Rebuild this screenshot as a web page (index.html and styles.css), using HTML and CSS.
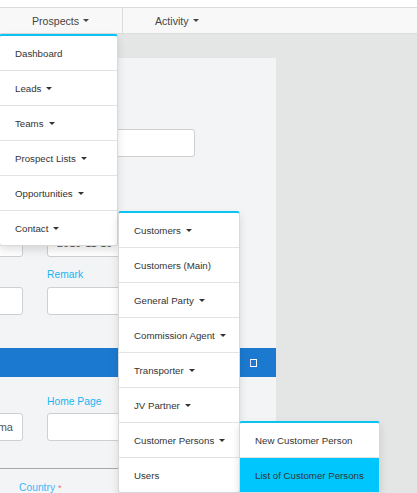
FILE: index.html
```html
<!DOCTYPE html>
<html>
<head>
<meta charset="utf-8">
<link rel="stylesheet" href="styles.css">
</head>
<body>
<div class="topstrip"></div>
<nav class="navbar">
  <div class="nav-item first">Prospects <span class="caret"></span>
    <ul class="dropdown d1">
      <li>Dashboard</li>
      <li>Leads <span class="caret"></span></li>
      <li>Teams <span class="caret"></span></li>
      <li>Prospect Lists <span class="caret"></span></li>
      <li>Opportunities <span class="caret"></span></li>
      <li class="sub">Contact <span class="caret"></span>
        <ul class="dropdown d2">
          <li>Customers <span class="caret"></span></li>
          <li>Customers (Main)</li>
          <li>General Party <span class="caret"></span></li>
          <li>Commission Agent <span class="caret"></span></li>
          <li>Transporter <span class="caret"></span></li>
          <li>JV Partner <span class="caret"></span></li>
          <li class="sub">Customer Persons <span class="caret"></span>
            <ul class="dropdown d3">
              <li>New Customer Person</li>
              <li class="active">List of Customer Persons</li>
            </ul>
          </li>
          <li>Users</li>
        </ul>
      </li>
    </ul>
  </div>
  <div class="nav-item">Activity <span class="caret"></span></div>
</nav>
<main class="main">
  <section class="panel">
    <div class="frow r1">
      <div></div>
      <div class="field"></div>
    </div>
    <div class="frow r2">
      <div class="field"></div>
      <div class="field"><span class="val">2019-11-19</span></div>
    </div>
    <div class="frow lbl r3">
      <div></div>
      <div class="label">Remark</div>
    </div>
    <div class="frow">
      <div class="field"></div>
      <div class="field"></div>
    </div>
    <div class="bar"><span class="sq"></span></div>
    <div class="frow lbl r5">
      <div></div>
      <div class="label">Home Page</div>
    </div>
    <div class="frow">
      <div class="field right"><span class="val">Kuma</span></div>
      <div class="field"></div>
    </div>
    <hr class="sep">
    <div class="label country">Country <span class="req">*</span></div>
  </section>
</main>
</body>
</html>
```
FILE: styles.css
```css
* { box-sizing: border-box; }
html, body { margin: 0; padding: 0; }
body {
  width: 417px;
  height: 493px;
  overflow: hidden;
  font-family: "Liberation Sans", Arial, sans-serif;
  background: #e4e6e5;
  color: #333;
}
.topstrip { height: 7px; background: #fff; }
.navbar {
  display: flex;
  height: 27px;
  background: #f8f8f8;
  border-top: 1px solid #dcdcdc;
  border-bottom: 1px solid #dcdcdc;
  font-size: 10.6px;
  color: #454545;
}
.nav-item {
  position: relative;
  display: flex;
  align-items: center;
  padding: 0 34px 0 32px;
  white-space: nowrap;
}
.nav-item.first { border-right: 1px solid #dcdcdc; width: 123px; }
.caret {
  display: inline-block;
  width: 0;
  height: 0;
  margin-left: 4px;
  border-top: 3.5px solid currentColor;
  border-left: 3px solid transparent;
  border-right: 3px solid transparent;
  vertical-align: middle;
}
.dropdown {
  position: absolute;
  list-style: none;
  margin: 0;
  padding: 0;
  background: #fff;
  border: 1px solid rgba(0,0,0,0.15);
  border-top: 2px solid #0bc3f3;
  border-radius: 3px;
  box-shadow: 0 4px 8px rgba(0,0,0,0.12);
  font-size: 9.7px;
  color: #333;
  z-index: 10;
}
.dropdown li {
  position: relative;
  height: 35px;
  display: flex;
  align-items: center;
  padding-left: 15px;
  border-bottom: 1px solid #e3e3e3;
  white-space: nowrap;
}
.dropdown li:last-child { border-bottom: none; height: 34px; }
.dropdown li .caret { margin-left: 5px; }
.d1 { top: 26px; left: -1px; width: 119px; }
.d2 { top: 0; left: 118px; width: 122px; }
.d3 { top: -2px; left: 120px; width: 141px; z-index: 11; }
.dropdown li.active { background: #00c6fe; }

.main {
  padding-top: 24px;
  height: 459px;
}
.panel {
  width: 276px;
  height: 435px;
  background: #f3f4f6;
  overflow: hidden;
  padding-top: 71px;
}
.frow {
  display: grid;
  grid-template-columns: 148px 148px;
  column-gap: 24px;
  margin-left: -125px;
}
.field {
  height: 28px;
  background: #fff;
  border: 1px solid #cfcfcf;
  border-radius: 3px;
  font-size: 11px;
  color: #555;
  display: flex;
  align-items: center;
  padding: 0 9px;
  overflow: hidden;
  white-space: nowrap;
}
.field.right { justify-content: flex-end; }
.r2 { margin-top: 72px; }
.lbl { height: 12px; }
.r3 { margin-top: 12px; margin-bottom: 6px; }
.label {
  font-size: 10.3px;
  line-height: 12px;
  color: #17b5f3;
}
.bar {
  margin-top: 33px;
  height: 29px;
  background: #1b7ad0;
  display: flex;
  align-items: center;
  justify-content: flex-end;
  padding-right: 19px;
}
.sq {
  width: 7px;
  height: 8px;
  border: 1.5px solid #fff;
  border-left-color: #e8d8ff;
}
.r5 { margin-top: 19px; margin-bottom: 5px; }
.sep {
  margin: 27px 0 0 0;
  border: none;
  border-top: 1px solid #a8a8a8;
  height: 0;
}
.country {
  margin-top: 13px;
  padding-left: 19px;
  color: #3db8fb;
}
.req { color: #e8707a; font-size: 9px; vertical-align: top; }
```
